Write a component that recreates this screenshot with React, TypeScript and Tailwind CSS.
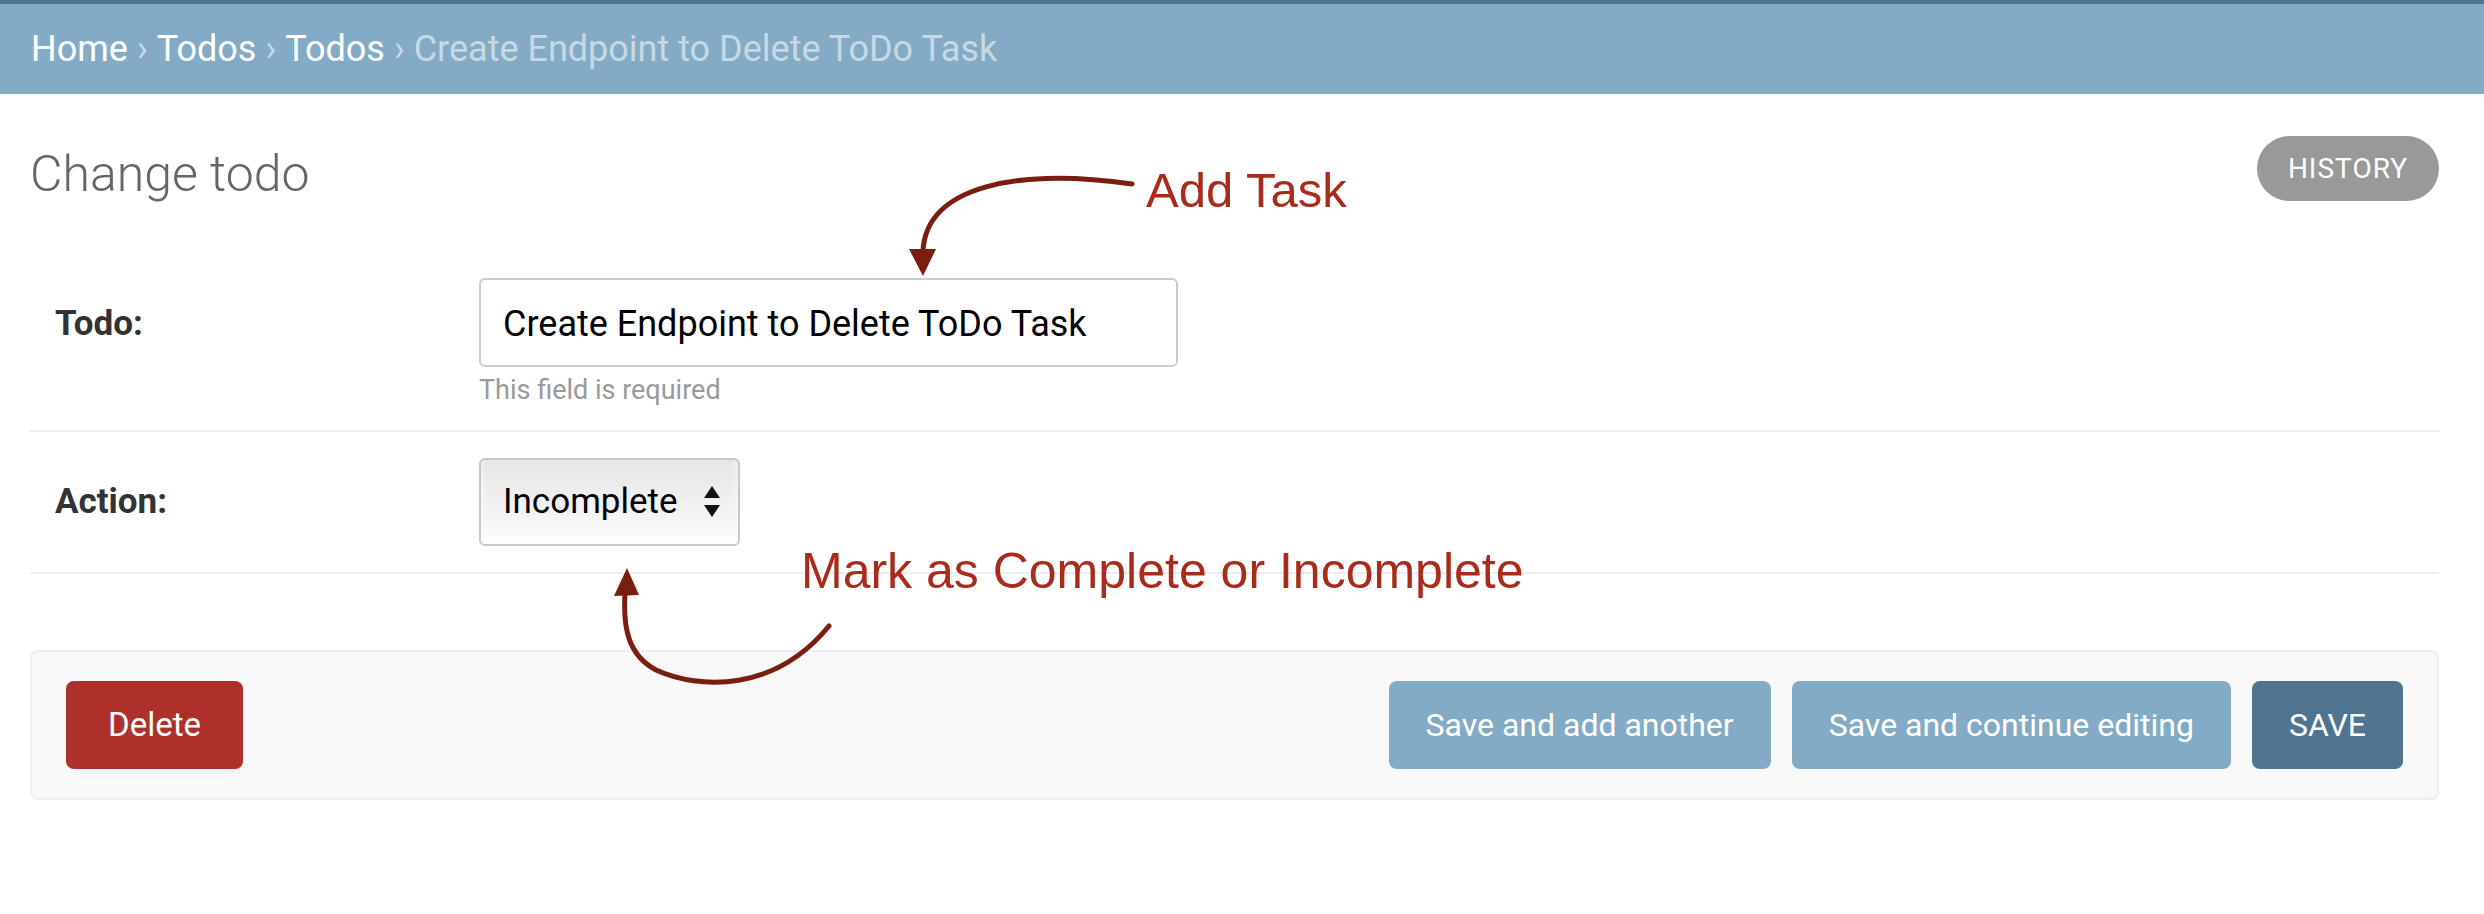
const CRUMBS = ['Home', 'Todos', 'Todos'];

function SelectArrows() {
  return (
    <svg width="16" height="32" viewBox="0 0 16 32" className="ml-[26px]">
      <polygon points="8,0 16,12 0,12" fill="#111" />
      <polygon points="0,19 16,19 8,31" fill="#111" />
    </svg>
  );
}

function Annotations() {
  return (
    <>
      <svg
        className="pointer-events-none absolute left-0 top-0"
        width="2484"
        height="914"
        viewBox="0 0 2484 914"
      >
        <path
          d="M1132 184 C1020 168 925 185 923 252"
          fill="none"
          stroke="#7a1e10"
          strokeWidth="5"
          strokeLinecap="round"
        />
        <polygon points="923,276 909,249 936,249" fill="#7a1e10" />
        <path
          d="M829 626 C775 692 700 690 656 670 C628 655 623 628 625 594"
          fill="none"
          stroke="#7a1e10"
          strokeWidth="5"
          strokeLinecap="round"
        />
        <polygon points="627,568 614,596 639,595" fill="#7a1e10" />
      </svg>
      <span className="absolute left-[1146px] top-[166px] font-['Liberation_Sans',Arial,sans-serif] text-[49px] leading-none text-[#a82b1b]">
        Add Task
      </span>
      <span className="absolute left-[801px] top-[546px] font-['Liberation_Sans',Arial,sans-serif] text-[50px] leading-none text-[#a82b1b]">
        Mark as Complete or Incomplete
      </span>
    </>
  );
}

export default function App() {
  return (
    <div className="relative min-h-[914px] bg-white font-['Roboto',sans-serif]">
      <div className="flex h-[94px] items-center border-t-4 border-[#4f7390] bg-[#84abc5] pl-[31px] text-[36px] text-white">
        {CRUMBS.map((c, i) => (
          <span key={i} className="flex items-center">
            {c}
            <span className="mx-[9px] text-[#c6d9e5]">›</span>
          </span>
        ))}
        <span className="text-[#c6d9e5]">Create Endpoint to Delete ToDo Task</span>
      </div>

      <div className="pl-[30px] pr-[45px]">
        <div className="mb-[50px] mt-[42px] flex items-center justify-between">
          <h1 className="pt-[10px] text-[50px] font-light leading-none text-[#666]">Change todo</h1>
          <button className="flex h-[65px] w-[182px] items-center justify-center rounded-full bg-[#999] text-[28px] tracking-[1px] text-white">
            HISTORY
          </button>
        </div>

        <div className="flex border-b-2 border-[#eee] pb-[24px] pl-[25px] pt-[27px]">
          <div className="flex h-[89px] w-[424px] items-center pt-[3px] text-[35px] font-bold text-[#333]">
            Todo:
          </div>
          <div>
            <div className="flex h-[89px] w-[699px] items-center rounded-[6px] border-2 border-[#ccc] pl-[22px] pt-[3px] text-[36px] text-black">
              Create Endpoint to Delete ToDo Task
            </div>
            <div className="mt-[7px] text-[27px] leading-[32px] text-[#999]">This field is required</div>
          </div>
        </div>

        <div className="flex border-b-2 border-[#eee] pb-[26px] pl-[25px] pt-[26px]">
          <div className="flex h-[88px] w-[424px] items-center text-[35px] font-bold text-[#333]">
            Action:
          </div>
          <div className="flex h-[88px] w-[261px] items-center rounded-[6px] border-2 border-[#c8c8c8] bg-gradient-to-b from-[#e6e6e6] to-[#fbfbfb] pl-[22px] text-[35px] text-black shadow-[inset_0_-6px_8px_rgba(255,255,255,0.8)]">
            Incomplete
            <SelectArrows />
          </div>
        </div>

        <div className="mt-[76px] flex items-center justify-between rounded-[8px] border-2 border-[#eee] bg-[#f8f8f8] px-[34px] py-[29px]">
          <button className="flex h-[88px] items-center rounded-[8px] bg-[#ad302a] px-[42px] text-[33px] text-white">
            Delete
          </button>
          <div className="flex gap-[21px]">
            <button className="flex h-[88px] items-center rounded-[8px] bg-[#84abc5] px-[37px] text-[32px] text-white">
              Save and add another
            </button>
            <button className="flex h-[88px] items-center rounded-[8px] bg-[#84abc5] px-[37px] text-[32px] text-white">
              Save and continue editing
            </button>
            <button className="flex h-[88px] items-center rounded-[8px] bg-[#4e7490] px-[37px] text-[32px] text-white">
              SAVE
            </button>
          </div>
        </div>
      </div>

      <Annotations />
    </div>
  );
}
